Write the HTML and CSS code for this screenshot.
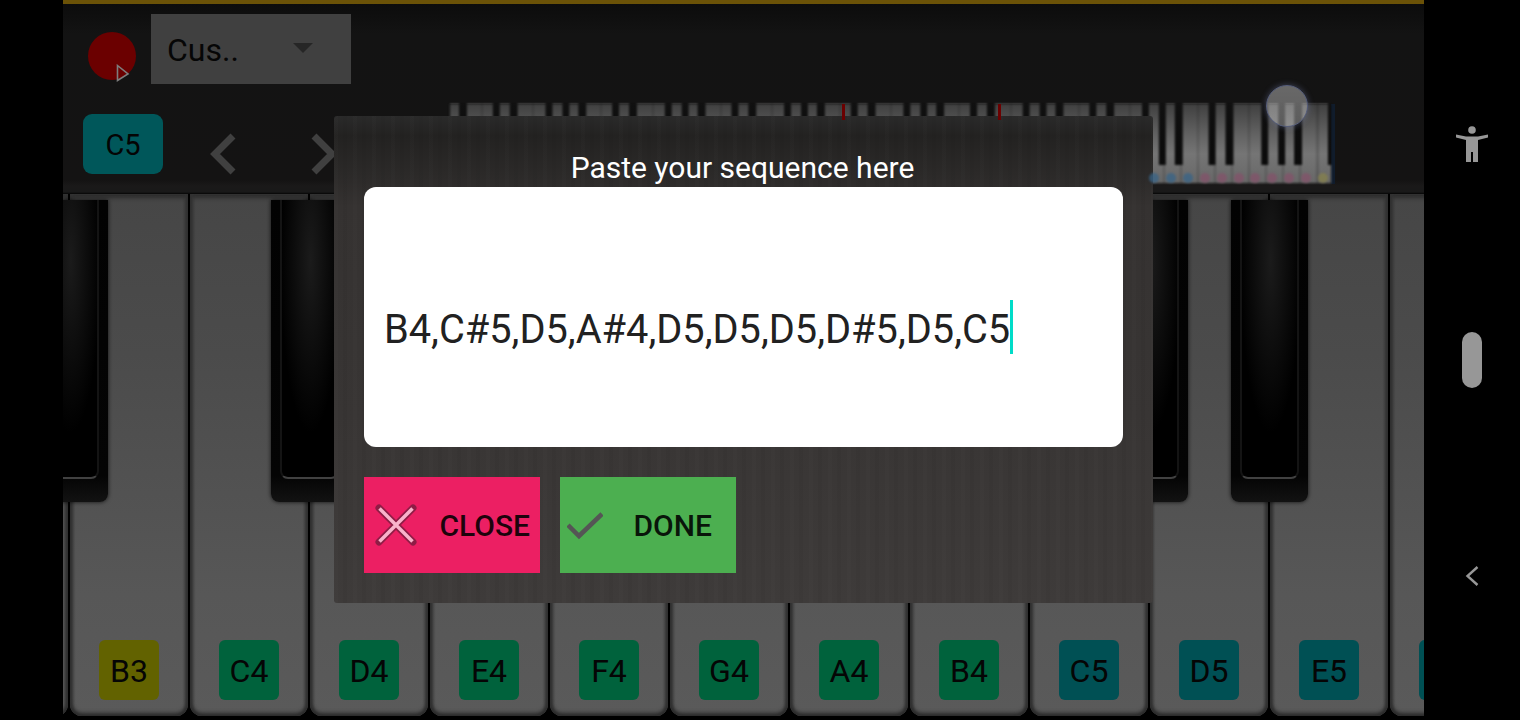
FILE: index.html
```html
<!DOCTYPE html>
<html lang="en">
<head>
    <meta charset="UTF-8">
    <meta name="viewport" content="width=device-width, initial-scale=1.0">
    <title>Piano</title>
    <link rel="stylesheet" href="styles.css">
</head>
<body>
    <main class="app">
        <header class="toolbar">
            <div class="toolbar-row">
                <div class="record">
                    <svg class="record-cursor" width="14" height="18" viewBox="0 0 14 18">
                        <path d="M1.5 1.5 L12 10 L1.5 16.5 Z" fill="none" stroke="#7d7d7d" stroke-width="1.6"/>
                    </svg>
                </div>
                <div class="select">
                    <span>Cus..</span>
                    <i class="caret"></i>
                </div>
            </div>
            <div class="toolbar-row nav-row">
                <div class="current-note">C5</div>
                <svg class="chevron" width="28" height="44" viewBox="0 0 28 44">
                    <path d="M24 4 L6 22 L24 40" fill="none" stroke="#404040" stroke-width="7"/>
                </svg>
                <svg class="chevron chevron-next" width="28" height="44" viewBox="0 0 28 44">
                    <path d="M4 4 L22 22 L4 40" fill="none" stroke="#404040" stroke-width="7"/>
                </svg>
                <div class="mini-keyboard">
                    <div class="mini-dots">
                        <i class="dot blue"></i><i class="dot blue"></i><i class="dot blue"></i>
                        <i class="dot pink"></i><i class="dot pink"></i><i class="dot pink"></i><i class="dot pink"></i>
                        <i class="dot pink"></i><i class="dot pink"></i><i class="dot pink"></i>
                        <i class="dot yellow"></i>
                    </div>
                    <i class="range-mark mark-left"></i>
                    <i class="range-mark mark-right"></i>
                    <i class="range-handle"></i>
                </div>
            </div>
        </header>

        <section class="keyboard">
            <div class="key"></div>
            <div class="key"><span class="note note-yellow">B3</span></div>
            <div class="key"><span class="note note-green">C4</span></div>
            <div class="key"><span class="note note-green">D4</span></div>
            <div class="key"><span class="note note-green">E4</span></div>
            <div class="key"><span class="note note-green">F4</span></div>
            <div class="key"><span class="note note-green">G4</span></div>
            <div class="key"><span class="note note-green">A4</span></div>
            <div class="key"><span class="note note-green">B4</span></div>
            <div class="key"><span class="note note-teal">C5</span></div>
            <div class="key"><span class="note note-teal">D5</span></div>
            <div class="key"><span class="note note-teal">E5</span></div>
            <div class="key"><span class="note note-teal"></span></div>

            <div class="black-key bk-1"><div class="black-top"></div></div>
            <div class="black-key bk-2"><div class="black-top"></div></div>
            <div class="black-key bk-3"><div class="black-top"></div></div>
            <div class="black-key bk-4"><div class="black-top"></div></div>
        </section>

        <div class="dialog">
            <h2 class="dialog-title">Paste your sequence here</h2>
            <div class="sequence-input"><span>B4,C#5,D5,A#4,D5,D5,D5,D#5,D5,C5</span><i class="text-cursor"></i></div>
            <div class="dialog-buttons">
                <button class="btn btn-close">
                    <svg class="btn-icon" width="42" height="42" viewBox="0 0 42 42">
                        <path d="M4 4 L38 38 M38 4 L4 38" stroke="#8e1c45" stroke-width="7" stroke-linecap="round"/>
                        <path d="M4.5 4.5 L37.5 37.5 M37.5 4.5 L4.5 37.5" stroke="#f9b3cb" stroke-width="3.5"/>
                    </svg>
                    CLOSE
                </button>
                <button class="btn btn-done">
                    <svg class="btn-icon" width="36" height="28" viewBox="0 0 36 28">
                        <path d="M1 13 L12 24 L35 2" fill="none" stroke="#555555" stroke-width="4.5"/>
                    </svg>
                    DONE
                </button>
            </div>
        </div>
    </main>

    <nav class="sidebar">
        <svg class="a11y" width="32" height="36" viewBox="0 0 32 36">
            <circle cx="16" cy="4" r="3.8" fill="#979797"/>
            <path d="M0 8.5 L10 10.5 H22 L32 8.5 L32 11.5 L22 14 V36 H17 V26 H15 V36 H10 V14 L0 11.5 Z" fill="#979797"/>
        </svg>
        <div class="pill"></div>
        <svg class="back" width="14" height="20" viewBox="0 0 14 20">
            <path d="M12.5 1 L2.5 10 L12.5 19" fill="none" stroke="#979797" stroke-width="2.4"/>
        </svg>
    </nav>
</body>
</html>
```

FILE: styles.css
```css
* {
    box-sizing: border-box;
}
body {
    margin: 0;
    width: 1520px;
    height: 720px;
    overflow: hidden;
    background: #000;
    display: flex;
    padding-left: 63px;
    font-family: Roboto, "Liberation Sans", sans-serif;
}
.app {
    position: relative;
    width: 1361px;
    height: 720px;
    overflow: hidden;
    background: #000;
}

/* top bar */
.toolbar {
    height: 194px;
    padding-top: 10px;
    border-top: 4px solid #6b5207;
    background: linear-gradient(#0c0c0c, #131313 30px, #141313 176px, #1a1919 182px, #191919 188px, #050505);
}
.toolbar-row {
    display: flex;
    align-items: flex-start;
    height: 70px;
    padding-left: 25px;
}
.record {
    position: relative;
    width: 48px;
    height: 48px;
    margin-top: 18px;
    border-radius: 50%;
    background: #6b0000;
}
.record-cursor {
    position: absolute;
    left: 28px;
    top: 32px;
}
.select {
    display: flex;
    align-items: center;
    justify-content: space-between;
    width: 200px;
    height: 70px;
    margin-left: 15px;
    padding: 2px 38px 0 16px;
    background: #404040;
    color: #060606;
    font-size: 32px;
}
.caret {
    width: 0;
    height: 0;
    border-left: 10px solid transparent;
    border-right: 10px solid transparent;
    border-top: 10px solid #262626;
    margin-top: -4px;
}
.nav-row {
    align-items: center;
    height: 80px;
    margin-top: 20px;
    padding-left: 20px;
}
.current-note {
    width: 80px;
    height: 60px;
    border-radius: 9px;
    background: #00575a;
    color: #040404;
    font-size: 29px;
    line-height: 62px;
    text-align: center;
}
.chevron {
    margin-left: 46px;
    margin-top: 20px;
}
.chevron-next {
    margin-left: 73px;
}
.mini-keyboard {
    position: relative;
    width: 886px;
    height: 80px;
    margin-left: 111px;
    border-right: 4px solid #101c2c;
}
.mini-keyboard::before {
    content: "";
    position: absolute;
    inset: 0;
    background-image:
        linear-gradient(90deg, #0c0c0c 0 7px, transparent 7px 17px, #0c0c0c 17px 24px, transparent 24px 33px, #0c0c0c 33px 41px, transparent 41px 67px, #0c0c0c 67px 74px, transparent 74px 84px, #0c0c0c 84px 91px, transparent 91px),
        repeating-linear-gradient(90deg, #858585 0 15px, #6e6e6e 15px 17.05px),
        linear-gradient(#1a1a1a, #1a1a1a);
    background-size: 119.3px 61px, 100% 79px, 100% 100%;
    background-position: 96.5px 0, 0 0, 0 0;
    background-repeat: repeat-x, no-repeat, no-repeat;
    filter: blur(1.2px) brightness(.88);
}
.mini-keyboard::after {
    content: "";
    position: absolute;
    inset: 0 0 1px 0;
    background: linear-gradient(rgba(20,20,20,.55), rgba(20,20,20,.2) 30px, transparent 50px, rgba(20,20,20,.14));
}
.mini-dots {
    position: absolute;
    z-index: 1;
    right: 3px;
    bottom: 1px;
    display: flex;
    gap: 6.9px;
}
.dot {
    width: 10px;
    height: 10px;
    border-radius: 50%;
    opacity: .75;
    filter: blur(0.8px);
}
.blue {
    background: #386488;
}
.pink {
    background: #84526a;
}
.yellow {
    background: #87824c;
}
.range-mark {
    position: absolute;
    z-index: 1;
    top: 0;
    width: 3px;
    height: 16px;
    background: #6b0000;
}
.mark-left {
    left: 393px;
}
.mark-right {
    left: 549px;
}
.range-handle {
    position: absolute;
    z-index: 1;
    left: 817px;
    top: -19px;
    width: 42px;
    height: 42px;
    border-radius: 50%;
    background: linear-gradient(rgba(255,255,255,.36), rgba(255,255,255,.32));
    border: 1px solid #565e7c;
    box-shadow: 0 0 6px rgba(120,130,180,.45);
}

/* piano keys */
.keyboard {
    position: relative;
    display: flex;
    gap: 2px;
    height: 522px;
    margin-left: -113px;
}
.key {
    flex: none;
    display: flex;
    flex-direction: column;
    justify-content: flex-end;
    align-items: center;
    width: 118px;
    height: 522px;
    padding-bottom: 16px;
    border-radius: 0 0 12px 12px;
    background: linear-gradient(#464646, #4b4b4b 160px, #575757 400px, #5a5a5a);
    box-shadow: inset 0 -3px 4px #2a2a2a, inset 3px 0 3px #363636, inset -3px 0 3px #363636, inset 0 4px 4px #2c2c2c;
}
.note {
    width: 60px;
    height: 60px;
    border-radius: 6px;
    color: #050505;
    font-size: 32px;
    line-height: 62px;
    text-align: center;
}
.note-yellow {
    background: #626200;
}
.note-green {
    background: #00623c;
}
.note-teal {
    background: #005054;
}
.black-key {
    position: absolute;
    top: 6px;
    width: 77px;
    height: 302px;
    padding: 0 9px 23px;
    border-radius: 0 0 8px 8px;
    background: linear-gradient(#020202, #040404 275px, #121212);
    box-shadow: 0 0 4px rgba(0,0,0,.8);
}
.black-top {
    height: 100%;
    border: 2px solid #2e2e2e;
    border-top: 0;
    border-left-color: #141414;
    border-right-color: #141414;
    border-bottom-color: #414141;
    border-radius: 0 0 8px 8px;
    background: radial-gradient(ellipse 55% 62% at 52% 22%, #1b1b1b, #000);
}
.bk-1 {
    left: 81px;
}
.bk-2 {
    left: 321px;
}
.bk-3 {
    left: 1161px;
}
.bk-4 {
    left: 1281px;
}

/* dialog */
.dialog {
    position: absolute;
    left: 271px;
    top: 116px;
    width: 819px;
    height: 487px;
    padding: 0 30px;
    border-radius: 3px;
    background:
        repeating-linear-gradient(90deg, rgba(255,255,255,.012) 0 4px, transparent 4px 9px, rgba(0,0,0,.035) 9px 13px, transparent 13px 19px),
        linear-gradient(#2a2a2a, #232221 20px, #2c2a29 60px, #353231 90px, #383534 300px, #3e3b3a);
}
.dialog-title {
    height: 71px;
    margin: 0;
    padding: 35px 2px 0 0;
    color: #fff;
    font-size: 30px;
    font-weight: 400;
    line-height: 34px;
    text-align: center;
    white-space: nowrap;
}
.sequence-input {
    display: flex;
    align-items: center;
    height: 260px;
    padding: 24px 0 0 20px;
    border-radius: 12px;
    background: #fff;
    color: #212121;
    font-size: 39.75px;
}
.text-cursor {
    width: 3px;
    height: 54px;
    margin-top: -4px;
    background: #00dcc8;
}
.dialog-buttons {
    display: flex;
    gap: 20px;
    margin-top: 30px;
}
.btn {
    position: relative;
    width: 176px;
    height: 96px;
    padding: 0 10px 0 0;
    border: 0;
    font-family: inherit;
    font-size: 30px;
    font-weight: 500;
    color: rgba(0,0,0,.88);
    text-align: right;
}
.btn-icon {
    position: absolute;
    top: 27px;
    left: 11px;
}
.btn-close {
    background: #ec1f63;
}
.btn-done {
    padding-right: 24px;
    background: #4caf50;
}
.btn-done .btn-icon {
    top: 35px;
    left: 7px;
}

/* system bar on the right */
.sidebar {
    display: flex;
    flex-direction: column;
    align-items: center;
    width: 96px;
    padding-top: 126px;
}
.pill {
    width: 20px;
    height: 56px;
    margin-top: 170px;
    border-radius: 10px;
    background: #979797;
}
.back {
    margin-top: 178px;
}
```
